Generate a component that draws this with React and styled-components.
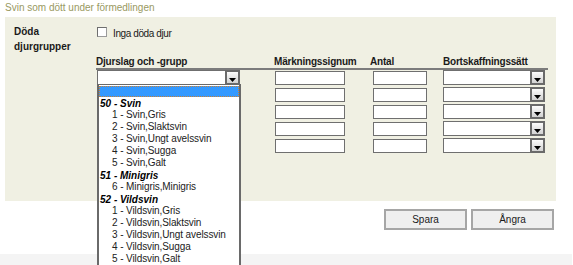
import styled, { createGlobalStyle } from "styled-components";

const GlobalStyle = createGlobalStyle`
    html, body {
        margin: 0;
        overflow: hidden;
        background: #fff;
    }
    body {
        font-family: "Liberation Sans", Arial, sans-serif;
        font-size: 10px;
        color: #1a1a1a;
    }
`

const groups = [
    { label: '50 - Svin', items: ['1 - Svin,Gris', '2 - Svin,Slaktsvin', '3 - Svin,Ungt avelssvin', '4 - Svin,Sugga', '5 - Svin,Galt'] },
    { label: '51 - Minigris', items: ['6 - Minigris,Minigris'] },
    { label: '52 - Vildsvin', items: ['1 - Vildsvin,Gris', '2 - Vildsvin,Slaktsvin', '3 - Vildsvin,Ungt avelssvin', '4 - Vildsvin,Sugga', '5 - Vildsvin,Galt'] },
];

const rows = [0, 1, 2, 3, 4];

function Select({ width, open }) {
    return (
        <SelectBox $width={width}>
            <SelectValue />
            <SelectArrow>
                <svg width="7" height="4" viewBox="0 0 7 4">
                    <path d="M0 0 H7 L3.5 4 Z" fill="#000" />
                </svg>
            </SelectArrow>
            {open && (
                <DropList>
                    <Highlight />
                    {groups.map(g => (
                        <div key={g.label}>
                            <GroupLabel>{g.label}</GroupLabel>
                            {g.items.map(item => <Option key={item}>{item}</Option>)}
                        </div>
                    ))}
                </DropList>
            )}
        </SelectBox>
    );
}

export default function App() {
    return (
        <>
            <GlobalStyle />
            <Title>Svin som dött under förmedlingen</Title>
            <Panel>
                <Label>Döda<br />djurgrupper</Label>
                <Content>
                    <CheckRow>
                        <CheckBox />
                        <CheckText>Inga döda djur</CheckText>
                    </CheckRow>
                    <Table>
                        <Head>Djurslag och -grupp</Head>
                        <Head>Märkningssignum</Head>
                        <Head>Antal</Head>
                        <Head>Bortskaffningssätt</Head>
                        {rows.map(r => (
                            <Row key={r}>
                                <Cell $pad={1}><Select width={143} open={r === 0} /></Cell>
                                <Cell $pad={1}><TextInput $width={70} /></Cell>
                                <Cell $pad={3}><TextInput $width={54} /></Cell>
                                <Cell $pad={0}><Select width={102} /></Cell>
                            </Row>
                        ))}
                    </Table>
                </Content>
            </Panel>
            <Buttons>
                <Button>Spara</Button>
                <Button>Ångra</Button>
            </Buttons>
            <Footer />
        </>
    );
}

const Title = styled.div`
    padding: 1px 0 2px 5px;
    height: 14px;
    line-height: 14px;
    color: #99995f;
`

const Panel = styled.div`
    margin-left: 5px;
    width: 542px;
    height: 177px;
    padding: 7px 0 0 9px;
    background-color: #f0f0e3;
    display: flex;
`

const Label = styled.div`
    width: 82px;
    flex-shrink: 0;
    font-weight: bold;
    line-height: 15px;
    color: #1a1a1a;
`

const Content = styled.div`
    display: flex;
    flex-direction: column;
`

const CheckRow = styled.div`
    height: 18px;
    display: flex;
    align-items: center;
    gap: 6px;
    padding-left: 1px;
`

const CheckBox = styled.span`
    width: 8px;
    height: 8px;
    background: #fff;
    border: 1px solid #9a9a9a;
    border-top-color: #6e6e6e;
    border-left-color: #6e6e6e;
    margin-top: -2px;
`

const CheckText = styled.span`
    letter-spacing: -0.4px;
`

const Table = styled.div`
    margin-top: 14px;
    display: grid;
    grid-template-columns: 178px 96px 73px 105px;
`

const Head = styled.div`
    height: 12px;
    line-height: 12px;
    font-weight: bold;
    letter-spacing: -0.2px;
    border-bottom: 2px solid #7c7c7c;
    white-space: nowrap;
`

const Row = styled.div`
    display: contents;
`

const Cell = styled.div`
    height: 15px;
    margin-bottom: 2px;
    padding-left: ${p => p.$pad}px;
    display: flex;
    align-items: flex-end;
    position: relative;
`

const TextInput = styled.div`
    width: ${p => p.$width}px;
    height: 14px;
    box-sizing: border-box;
    background: #fff;
    border: 1px solid #6f6f6f;
`

const SelectBox = styled.div`
    position: relative;
    width: ${p => p.$width}px;
    height: 15px;
    box-sizing: border-box;
    background: #fff;
    border: 1px solid #6f6f6f;
    display: flex;
`

const SelectValue = styled.div`
    flex: 1;
`

const SelectArrow = styled.div`
    width: 11px;
    margin: -1px -1px -1px 0;
    border: 2px solid #6a6a6a;
    background: linear-gradient(#fbfbfb, #d2d2d2);
    display: flex;
    align-items: flex-end;
    justify-content: center;
    padding-bottom: 1px;
`

const DropList = styled.div`
    position: absolute;
    top: 13px;
    left: -1px;
    width: 140px;
    height: 200px;
    background: #fff;
    border: 2px solid #6a6a6a;
    border-top-width: 1px;
    overflow: hidden;
    z-index: 5;
`

const Highlight = styled.div`
    height: 11px;
    margin: 1px 0 0;
    background: #3399ff;
    outline: 1px dotted #c98034;
    outline-offset: -1px;
`

const GroupLabel = styled.div`
    height: 12px;
    line-height: 13px;
    padding-left: 1px;
    font-weight: bold;
    font-style: italic;
    color: #000;
`

const Option = styled.div`
    height: 12px;
    line-height: 12px;
    padding-left: 13px;
    letter-spacing: -0.1px;
    color: #222;
    white-space: nowrap;
`

const Buttons = styled.div`
    width: 551px;
    margin-left: 5px;
    margin-top: 8px;
    display: flex;
    justify-content: flex-end;
    gap: 4px;
    padding-right: 2px;
    box-sizing: border-box;
`

const Button = styled.button`
    width: 83px;
    height: 21px;
    padding: 0;
    background: #efefef;
    border: 2px solid #a6a6a6;
    font-family: "Liberation Sans", Arial, sans-serif;
    font-size: 10px;
    color: #1a1a1a;
`

const Footer = styled.div`
    margin-top: 24px;
    width: 572px;
    height: 20px;
    background: #f4f4f4;
`
